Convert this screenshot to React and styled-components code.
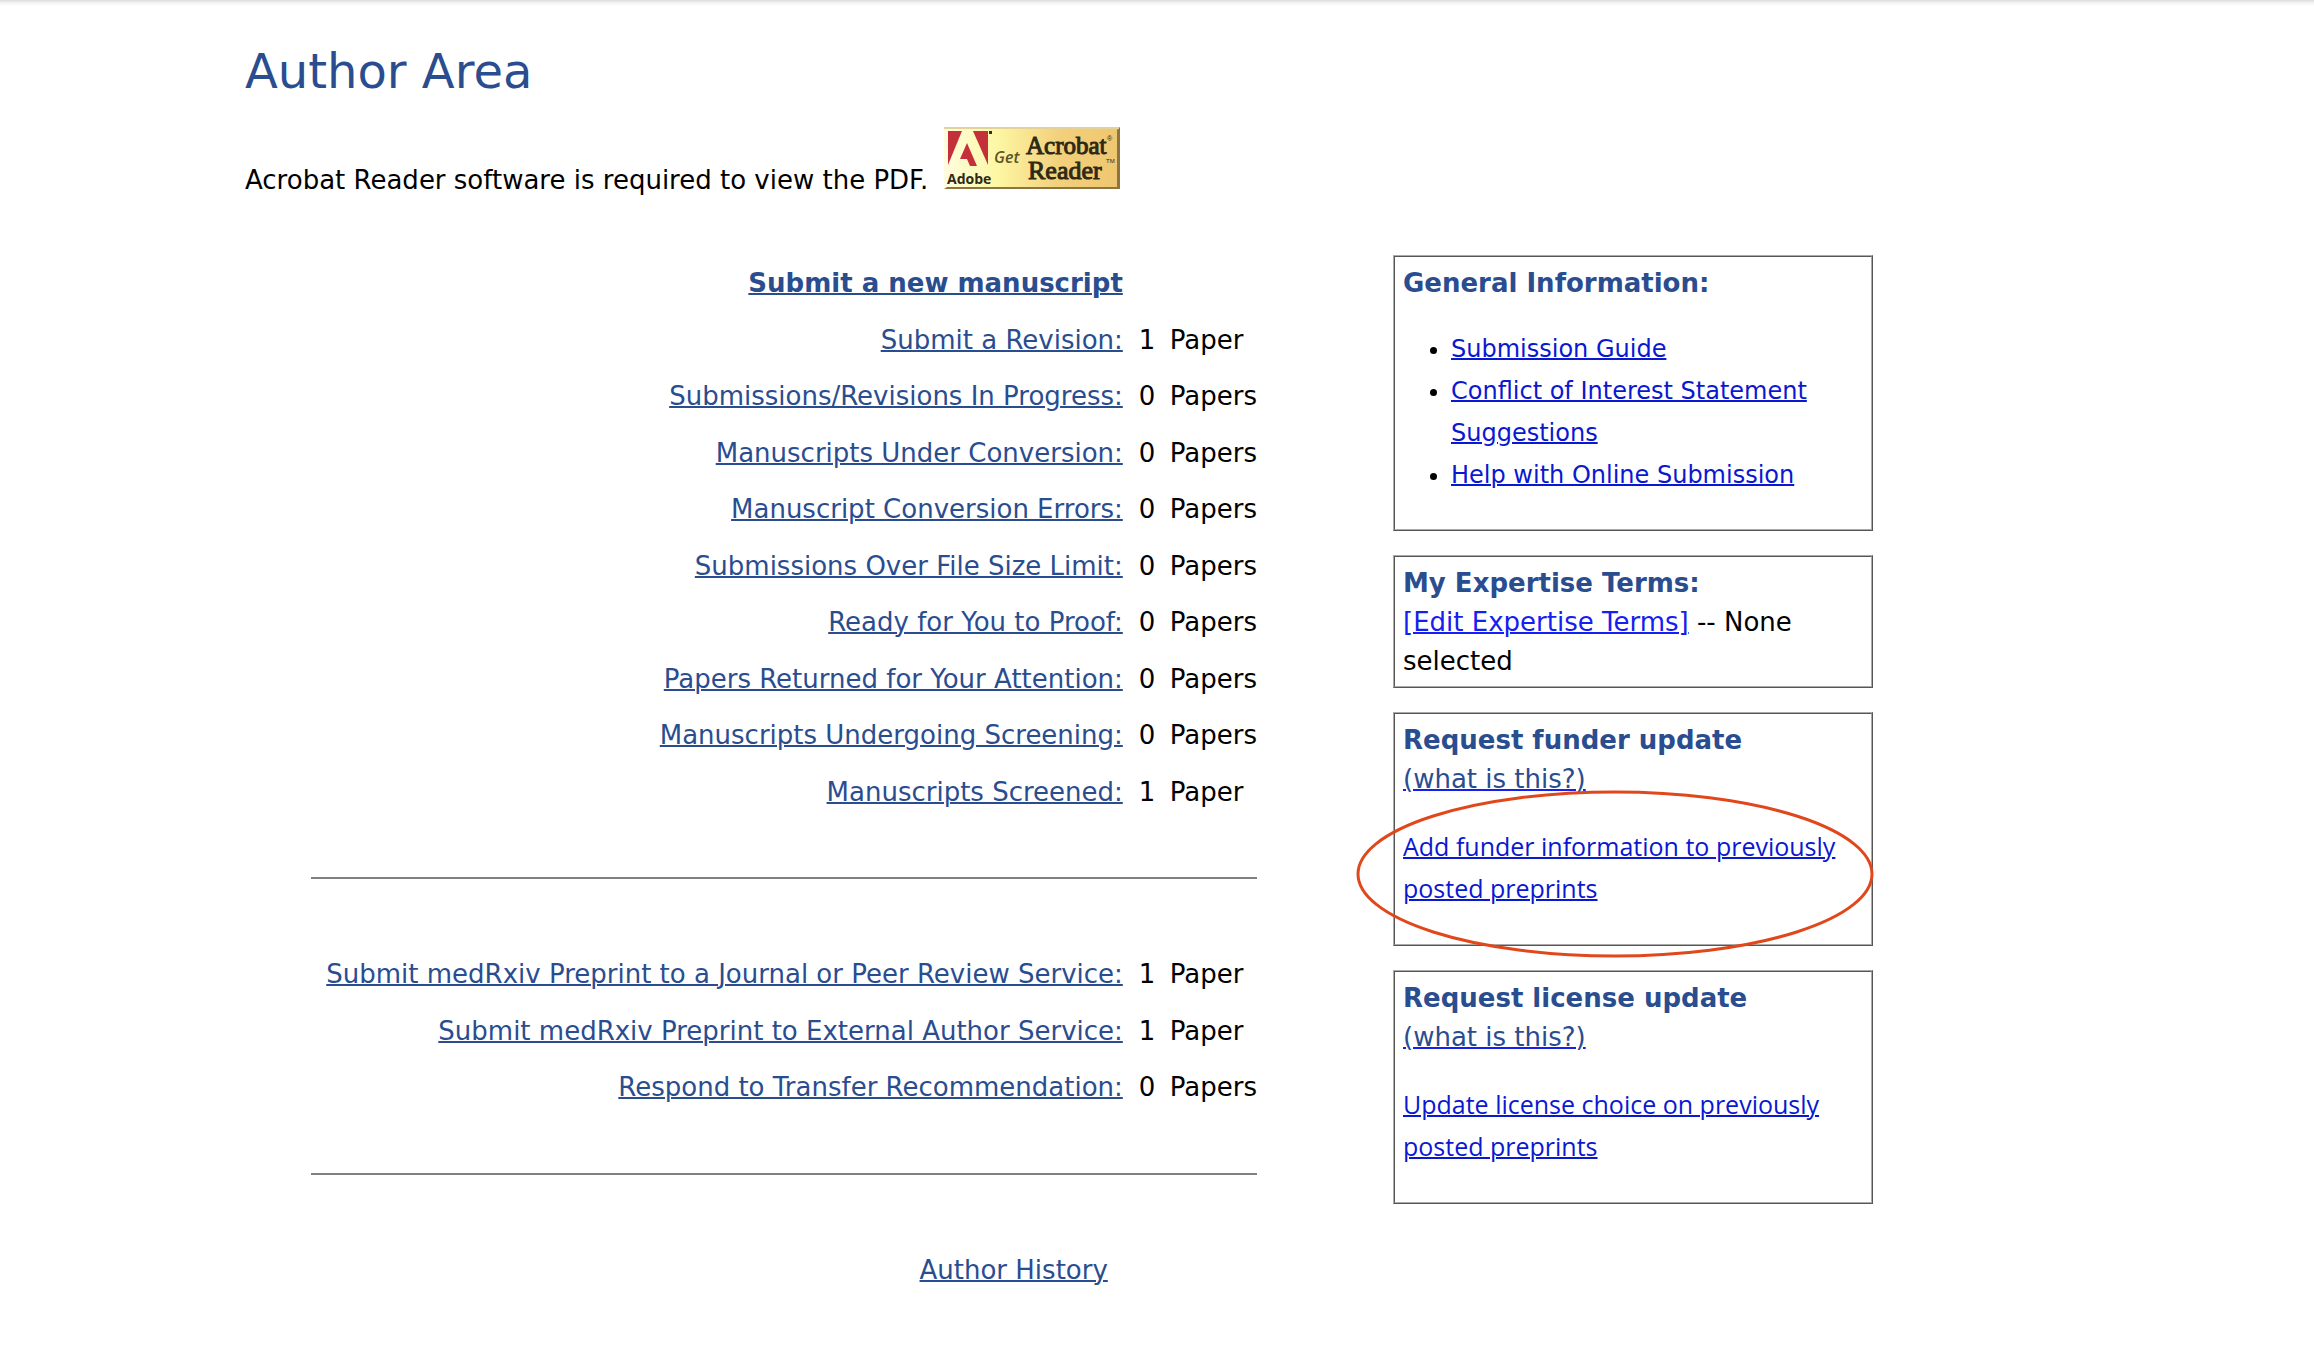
import React from "react";
import styled, { createGlobalStyle } from "styled-components";

const GlobalStyle = createGlobalStyle`
  * {
    box-sizing: border-box;
  }

  body {
    margin: 0;
    background: #ffffff;
    color: #000000;
    font-family: Verdana, "DejaVu Sans", sans-serif;
    font-size: 26px;
    line-height: 39px;
  }
`;

const Page = styled.div`
  padding: 43px 24px 0 245px;
  min-height: 100vh;
  background: linear-gradient(#dcdcdc, #f4f4f4 3px, #ffffff 6px) no-repeat;
  background-size: 100% 6px;
`;

const Container = styled.main`
  max-width: 1628px;
`;

const Title = styled.h1`
  margin: 0;
  color: #2a4d8f;
  font-size: 48px;
  font-weight: 400;
  line-height: 56px;
`;

const Notice = styled.p`
  display: flex;
  align-items: flex-end;
  gap: 16px;
  margin: 28px 0 58px;

  span {
    line-height: 34px;
  }

  svg {
    display: block;
    margin-bottom: 8px;
  }
`;

const Columns = styled.div`
  display: flex;
  align-items: flex-start;
  gap: 136px;
`;

const Queues = styled.section`
  flex: 1;
  margin-left: 66px;
`;

const Table = styled.table`
  width: 100%;
  border-collapse: collapse;

  td,
  th {
    height: 56px;
    padding: 0;
    font-weight: 400;
    white-space: nowrap;
  }

  tr:nth-child(odd) td,
  tr:nth-child(odd) th {
    height: 57px;
  }
`;

const LabelCell = styled.th`
  text-align: right;
`;

const CountCell = styled.td`
  width: 47px;

  && {
    padding-left: 16px;
  }
`;

const UnitCell = styled.td`
  width: 87px;
`;

const Link = styled.a`
  color: ${(props) => props.$color || "#2a4d8f"};
  font-weight: ${(props) => (props.$bold ? 700 : 400)};
  text-decoration-line: underline;
  text-decoration-thickness: 2px;
  text-decoration-color: ${(props) => props.$line || "currentcolor"};
`;

const Rule = styled.hr`
  height: 2px;
  margin: 57px 0 67px;
  border: 0;
  background: #808080;
`;

const HistoryCell = styled.td`
  text-align: right;

  && {
    padding-right: 15px;
  }
`;

const Sidebar = styled.aside`
  display: flex;
  flex-direction: column;
  gap: 24px;
  width: 480px;
`;

const Card = styled.section`
  position: relative;
  padding: 7px 8px 5px;
  border: 2px ridge #aaaaaa;
`;

const CardTitle = styled.h2`
  margin: 0;
  color: #2a4d8f;
  font-size: 26px;
  font-weight: 700;
  line-height: 39px;
`;

const CardText = styled.p`
  margin: 0;
`;

const List = styled.ul`
  margin: 25px 0 28px;
  padding-left: 48px;
  font-size: 24px;
  line-height: 42px;
`;

const Request = styled.p`
  margin: 26px 0 30px;
  font-family: "Lucida Grande", "Open Sans", sans-serif;
  font-size: 25px;
  line-height: 42px;
`;

const Ellipse = styled.svg`
  position: absolute;
  top: 76px;
  left: -39px;
  width: 519px;
  height: 168px;
  pointer-events: none;
`;

const queues = [
  { label: "Submit a Revision:", count: 1 },
  { label: "Submissions/Revisions In Progress:", count: 0 },
  { label: "Manuscripts Under Conversion:", count: 0 },
  { label: "Manuscript Conversion Errors:", count: 0 },
  { label: "Submissions Over File Size Limit:", count: 0 },
  { label: "Ready for You to Proof:", count: 0 },
  { label: "Papers Returned for Your Attention:", count: 0 },
  { label: "Manuscripts Undergoing Screening:", count: 0 },
  { label: "Manuscripts Screened:", count: 1 },
];

const transfers = [
  { label: "Submit medRxiv Preprint to a Journal or Peer Review Service:", count: 1 },
  { label: "Submit medRxiv Preprint to External Author Service:", count: 1 },
  { label: "Respond to Transfer Recommendation:", count: 0 },
];

const QueueRow = ({ label, count }) => (
  <tr>
    <LabelCell scope="row">
      <Link href="#">{label}</Link>
    </LabelCell>
    <CountCell>{count}</CountCell>
    <UnitCell>{count === 1 ? "Paper" : "Papers"}</UnitCell>
  </tr>
);

const RuleRow = () => (
  <tr>
    <td colSpan={3}>
      <Rule />
    </td>
  </tr>
);

const AcrobatBadge = () => (
  <svg width="176" height="62" viewBox="0 0 176 62" role="img" aria-label="Get Acrobat Reader">
    <defs>
      <linearGradient id="gold" x1="0" x2="1" y1="0" y2="0">
        <stop offset="0" stopColor="#fffde0" />
        <stop offset="0.3" stopColor="#fdf7a4" />
        <stop offset="0.65" stopColor="#f3d07c" />
        <stop offset="1" stopColor="#efc670" />
      </linearGradient>
    </defs>
    <rect width="176" height="62" fill="url(#gold)" />
    <path d="M0 62L3 60H173V3L176 0V62Z" fill="#8d7440" />
    <path d="M0 1H175" stroke="#e3d29a" strokeWidth="2" />
    <path d="M4 4H18L4 38Z" fill="#c4303a" />
    <path d="M29 4H44V38Z" fill="#c4303a" />
    <path d="M23 16L33 39H26L23 32H16Z" fill="#c4303a" />
    <rect x="45" y="4" width="3" height="3" fill="#333018" />
    <g fill="#2e2914">
      <text x="3" y="57" fontFamily="Open Sans, sans-serif" fontSize="14" fontWeight="700">Adobe</text>
      <text x="50" y="36" fill="#5c532a" fontFamily="Open Sans, sans-serif" fontSize="16" fontStyle="italic" fontWeight="600">Get</text>
      <text x="82" y="27" fontFamily="Liberation Serif, serif" fontSize="25" stroke="#2e2914">Acrobat</text>
      <text x="84" y="52" fontFamily="Liberation Serif, serif" fontSize="26" stroke="#2e2914">Reader</text>
      <text x="163" y="14" fontFamily="Liberation Sans, sans-serif" fontSize="7">®</text>
      <text x="162" y="36" fontFamily="Liberation Sans, sans-serif" fontSize="6">TM</text>
    </g>
  </svg>
);

const App = () => {
  return (
    <Page>
      <GlobalStyle />
      <Container>
        <Title>Author Area</Title>
        <Notice>
          <span>Acrobat Reader software is required to view the PDF.</span>
          <AcrobatBadge />
        </Notice>
        <Columns>
          <Queues>
            <Table>
              <tbody>
                <tr>
                  <LabelCell scope="row">
                    <Link href="#" $bold>Submit a new manuscript</Link>
                  </LabelCell>
                </tr>
                {queues.map((queue) => (
                  <QueueRow key={queue.label} {...queue} />
                ))}
              </tbody>
              <tbody>
                <RuleRow />
              </tbody>
              <tbody>
                {transfers.map((queue) => (
                  <QueueRow key={queue.label} {...queue} />
                ))}
              </tbody>
              <tbody>
                <RuleRow />
                <tr>
                  <HistoryCell>
                    <Link href="#">Author History</Link>
                  </HistoryCell>
                </tr>
              </tbody>
            </Table>
          </Queues>
          <Sidebar>
            <Card>
              <CardTitle>General Information:</CardTitle>
              <List>
                <li>
                  <Link href="#" $color="#0a18d0">Submission Guide</Link>
                </li>
                <li>
                  <Link href="#" $color="#0a18d0">Conflict of Interest Statement Suggestions</Link>
                </li>
                <li>
                  <Link href="#" $color="#0a18d0">Help with Online Submission</Link>
                </li>
              </List>
            </Card>
            <Card>
              <CardTitle>My Expertise Terms:</CardTitle>
              <CardText>
                <Link href="#" $color="#1520f0">[Edit Expertise Terms]</Link> -- None selected
              </CardText>
            </Card>
            <Card>
              <CardTitle>Request funder update</CardTitle>
              <CardText>
                <Link href="#" $line="#1520f0">(what is this?)</Link>
              </CardText>
              <Request>
                <Link href="#" $color="#0a18d0">Add funder information to previously posted preprints</Link>
              </Request>
              <Ellipse viewBox="0 0 519 168" aria-hidden="true">
                <ellipse cx="259" cy="84" rx="257" ry="82" fill="none" stroke="#e0481c" strokeWidth="3" />
              </Ellipse>
            </Card>
            <Card>
              <CardTitle>Request license update</CardTitle>
              <CardText>
                <Link href="#" $line="#1520f0">(what is this?)</Link>
              </CardText>
              <Request>
                <Link href="#" $color="#0a18d0">Update license choice on previously posted preprints</Link>
              </Request>
            </Card>
          </Sidebar>
        </Columns>
      </Container>
    </Page>
  );
};

export default App;
